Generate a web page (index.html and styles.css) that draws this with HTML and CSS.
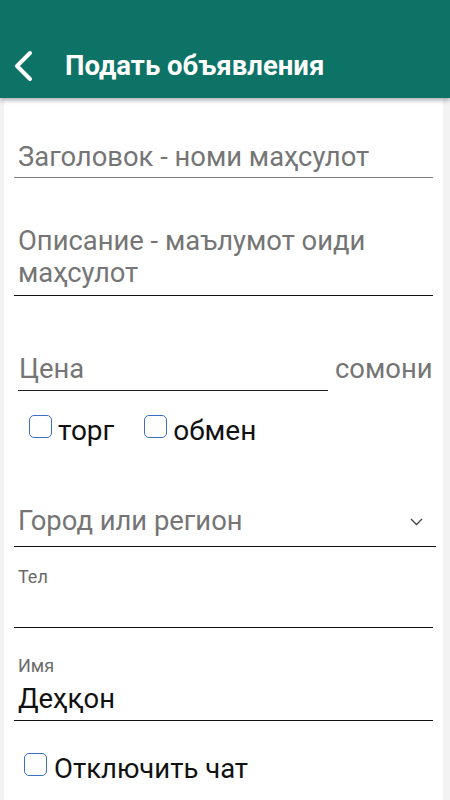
FILE: index.html
```html
<!DOCTYPE html>
<html lang="ru">
<head>
<meta charset="utf-8">
<title>Подать объявления</title>
<link rel="stylesheet" href="styles.css">
</head>
<body>
<div class="screen">
  <header class="appbar">
    <svg class="back" width="24" height="34" viewBox="0 0 24 34" aria-hidden="true">
      <polyline points="17,4 4,17 17,30" fill="none" stroke="#ffffff" stroke-width="4" stroke-linecap="round" stroke-linejoin="round"/>
    </svg>
    <h1 class="title">Подать объявления</h1>
  </header>
  <main class="form">
    <div class="field f-title"><span class="ph">Заголовок - номи маҳсулот</span></div>
    <div class="field f-desc"><span class="ph">Описание - маълумот оиди маҳсулот</span></div>
    <div class="price-row">
      <div class="field f-price"><span class="ph">Цена</span></div>
      <span class="unit">сомони</span>
    </div>
    <div class="checks checks-deal">
      <div class="check"><span class="box"></span><span class="ctext">торг</span></div>
      <div class="check"><span class="box"></span><span class="ctext">обмен</span></div>
    </div>
    <div class="field f-city">
      <span class="ph">Город или регион</span>
      <svg class="caret" width="13" height="8" viewBox="0 0 13 8" aria-hidden="true">
        <polyline points="1,1 6.5,6.5 12,1" fill="none" stroke="#444" stroke-width="1.3"/>
      </svg>
    </div>
    <div class="field f-tel">
      <div class="label">Тел</div>
      <div class="val"></div>
    </div>
    <div class="field f-name">
      <div class="label">Имя</div>
      <div class="val">Деҳқон</div>
    </div>
    <div class="checks checks-chat">
      <div class="check"><span class="box"></span><span class="ctext">Отключить чат</span></div>
    </div>
  </main>
</div>
</body>
</html>
```
FILE: styles.css
```css
html, body {
  margin: 0;
  padding: 0;
}
body {
  font-family: Roboto, "Noto Sans", "DejaVu Sans", sans-serif;
  background: #f3f3f3;
}
.screen {
  width: 450px;
  height: 800px;
  overflow: hidden;
  display: flex;
  flex-direction: column;
  background: #f3f3f3;
}
.appbar {
  position: relative;
  z-index: 2;
  height: 98px;
  box-sizing: border-box;
  padding-top: 34px;
  padding-left: 13px;
  display: flex;
  align-items: center;
  background: #0d7367;
  box-shadow: 0 2px 5px rgba(0, 0, 0, 0.35);
  flex: none;
}
.back {
  display: block;
}
.title {
  margin: 0 0 0 28px;
  color: #ffffff;
  font-size: 27.5px;
  font-weight: 700;
  line-height: 32px;
}
.form {
  flex: 1;
  margin: 0 7px 0 4px;
  padding: 0 10px;
  background: #ffffff;
}
.field {
  padding-left: 4px;
  border-bottom: 1px solid #111;
  font-size: 27.4px;
  line-height: 32px;
}
.ph {
  color: #757575;
}
.f-title {
  margin-top: 43px;
  padding-bottom: 4px;
  border-bottom-color: #808080;
}
.f-desc {
  margin-top: 47px;
  padding-bottom: 6px;
  padding-right: 60px;
}
.price-row {
  margin-top: 57px;
  display: flex;
  align-items: flex-start;
}
.f-price {
  margin-left: 4px;
  width: 309px;
  padding-left: 1px;
  padding-bottom: 5px;
  border-bottom-color: #222;
}
.unit {
  margin-left: 7px;
  font-size: 27.4px;
  line-height: 32px;
  color: #757575;
}
.checks {
  display: flex;
  align-items: flex-start;
  height: 32px;
}
.checks-deal {
  margin-top: 24px;
  padding-left: 15px;
  gap: 30px;
}
.checks-chat {
  margin-top: 32px;
  padding-left: 10px;
}
.check {
  display: flex;
  align-items: flex-start;
}
.box {
  width: 21px;
  height: 21px;
  border: 1.5px solid #3b6fc6;
  border-radius: 5px;
  flex: none;
}
.ctext {
  margin-left: 6px;
  font-size: 28px;
  line-height: 32px;
  color: #111;
}
.checks-chat .ctext {
  margin-left: 7px;
  font-size: 27.5px;
}
.f-city {
  margin-top: 58px;
  margin-right: -3px;
  padding-bottom: 9px;
  display: flex;
  align-items: center;
  justify-content: space-between;
}
.caret {
  margin-right: 13px;
  margin-top: 2px;
}
.label {
  font-size: 18px;
  line-height: 20px;
  color: #6b6b6b;
}
.f-tel {
  margin-top: 20px;
  padding-bottom: 8px;
}
.f-tel .val {
  height: 32px;
}
.f-name {
  margin-top: 28px;
  padding-bottom: 5px;
}
.f-name .val {
  margin-top: 7px;
  color: #111;
}
```
